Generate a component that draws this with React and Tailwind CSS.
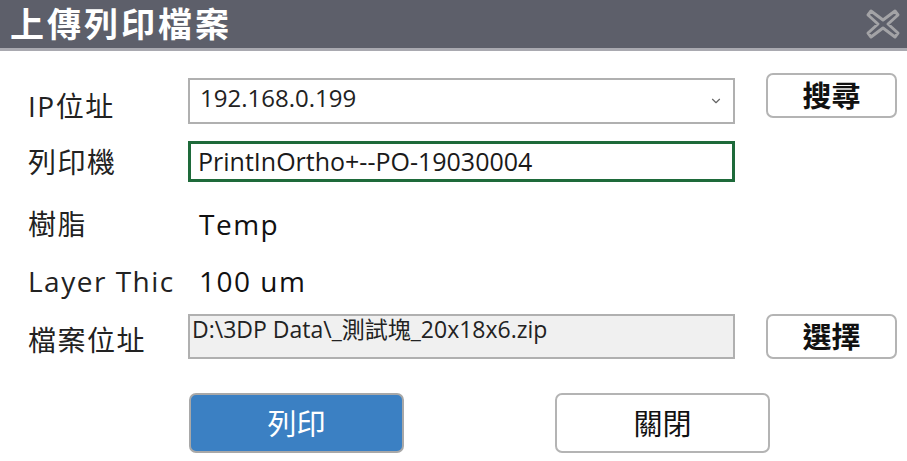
import { ChevronDown } from 'lucide-react'

const font = { fontFamily: '"Open Sans", "Noto Sans CJK TC", sans-serif' }

function CloseIcon() {
  return (
    <svg width="36" height="34" viewBox="0 0 36 34">
      <path
        d="M6 4 L18 13 L30 4 L33 8 L23 17 L33 26 L30 30 L18 21 L6 30 L3 26 L13 17 L3 8 Z"
        fill="#5d5f6a"
        stroke="#a3a3a6"
        strokeWidth="3"
        strokeLinejoin="round"
      />
    </svg>
  )
}

function Label({ children }) {
  return (
    <div className="w-[188px] pl-[28px] text-[28px] tracking-[1.5px] text-[#222] leading-none">
      {children}
    </div>
  )
}

function SideButton({ children }) {
  return (
    <button className="ml-[31px] w-[131px] h-[45px] rounded-[7px] border-2 border-[#b4b4b4] bg-white text-[29px] font-bold text-[#111] leading-none">
      {children}
    </button>
  )
}

export default function App() {
  return (
    <div className="w-[907px] h-[461px] bg-white overflow-hidden" style={font}>
      {/* Title bar */}
      <div className="h-[51px] bg-[#5d5f6a] border-b-[3px] border-[#a9a9b0] flex items-center justify-between pl-[10px] pr-[6px]">
        <h1 className="text-white text-[34px] font-bold tracking-[3px] leading-none">上傳列印檔案</h1>
        <CloseIcon />
      </div>

      <div className="pt-[22px]">
        {/* IP */}
        <div className="flex items-start h-[51px]">
          <div className="pt-[19px]"><Label>IP位址</Label></div>
          <div className="mt-[5px] w-[547px] h-[46px] border-2 border-[#b0b0b0] flex items-center justify-between pl-[10px] pr-[10px]">
            <span className="text-[24px] text-[#222] leading-none -mt-[6px]">192.168.0.199</span>
            <ChevronDown size={14} className="text-[#666]" strokeWidth={2} />
          </div>
          <SideButton>搜尋</SideButton>
        </div>

        {/* Printer */}
        <div className="flex items-center h-[41px] mt-[17px]">
          <Label>列印機</Label>
          <div className="w-[547px] h-[41px] border-[3px] border-[#1e6a3a] flex items-center pl-[7px]">
            <span className="text-[25px] text-[#1a1a1a] leading-none">PrintInOrtho+--PO-19030004</span>
          </div>
        </div>

        {/* Resin */}
        <div className="flex items-center h-[55px] mt-[14px]">
          <Label>樹脂</Label>
          <span className="pl-[11px] text-[28px] tracking-[1.5px] text-[#111] leading-none">Temp</span>
        </div>

        {/* Layer */}
        <div className="flex items-center h-[55px] mt-[2px]">
          <Label>Layer Thic</Label>
          <span className="pl-[11px] text-[28px] tracking-[1.5px] text-[#111] leading-none">100 um</span>
        </div>

        {/* File */}
        <div className="flex items-center h-[45px] mt-[6px]">
          <div className="pt-[6px]"><Label>檔案位址</Label></div>
          <div className="w-[547px] h-[45px] border-2 border-[#b0b0b0] bg-[#f0f0f0] flex items-start pl-[2px] pt-[2px]">
            <span className="text-[23px] text-[#222] leading-none">D:\3DP Data\_測試塊_20x18x6.zip</span>
          </div>
          <SideButton>選擇</SideButton>
        </div>

        {/* Actions */}
        <div className="flex mt-[34px] pl-[189px] gap-[151px]">
          <button className="w-[215px] h-[60px] rounded-[7px] border-2 border-[#a8a8a8] bg-[#3b80c3] text-white text-[29px] leading-none">
            列印
          </button>
          <button className="w-[215px] h-[60px] rounded-[7px] border-2 border-[#b4b4b4] bg-white text-[#111] text-[29px] leading-none">
            關閉
          </button>
        </div>
      </div>
    </div>
  )
}
